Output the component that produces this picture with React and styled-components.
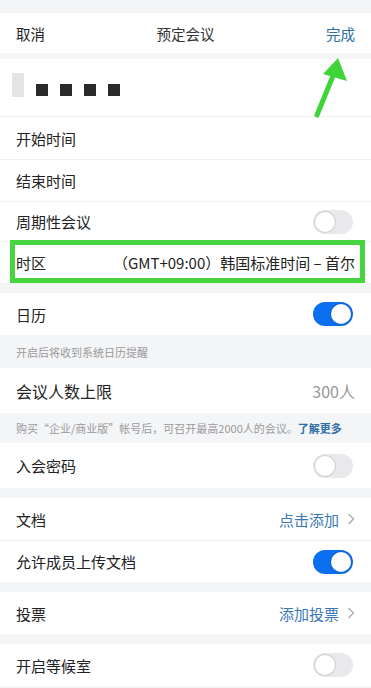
import styled, { createGlobalStyle } from "styled-components";

const GlobalStyle = createGlobalStyle`
  html, body {
    margin: 0;
    padding: 0;
    background: #f4f5f7;
  }
  body {
    font-family: "Noto Sans CJK SC", "Noto Sans", sans-serif;
    color: #222;
  }
`;

const Page = styled.div`
  position: relative;
  width: 371px;
  height: 688px;
  overflow: hidden;
  background: #f4f5f7;
  padding-top: 13px;
  box-sizing: border-box;
`;

const Header = styled.div`
  height: 40px;
  background: #fff;
  display: flex;
  align-items: center;
  justify-content: space-between;
  padding: 0 16px;
  font-size: 14.5px;
  margin-bottom: 6px;
  position: relative;
`;

const Title = styled.div`
  position: absolute;
  left: 0;
  right: 0;
  text-align: center;
  pointer-events: none;
  color: #333;
`;

const Done = styled.span`
  color: #2e6ea6;
`;

const Group = styled.div`
  background: #fff;
  margin-bottom: ${(p) => p.$gap || 0}px;
`;

const NameRow = styled.div`
  height: 57px;
  display: flex;
  align-items: center;
  gap: 12px;
  padding-left: 12px;
  border-bottom: 1px solid #f0f0f0;
`;

const Cursor = styled.div`
  width: 12px;
  height: 24px;
  background: #e4e4e6;
  margin-top: -5px;
`;

const Dots = styled.div`
  display: flex;
  gap: 12px;
  margin-top: 5px;
`;

const Dot = styled.span`
  width: 12px;
  height: 12px;
  background: #2a2a2a;
`;

const Row = styled.div`
  position: relative;
  height: ${(p) => p.$h || 42}px;
  display: flex;
  align-items: center;
  justify-content: space-between;
  padding: 0 16px;
  box-sizing: border-box;
  font-size: ${(p) => p.$fs || 15}px;
  color: #222;
  & + & {
    border-top: 1px solid #f0f0f0;
  }
  ${(p) =>
    p.$highlight &&
    `
    &::after {
      content: "";
      position: absolute;
      left: 10px;
      right: 6px;
      top: -2px;
      bottom: 0;
      border: 5px solid #46d43f;
    }
  `}
`;

const Value = styled.span`
  color: ${(p) => (p.$muted ? "#999" : "#222")};
  font-size: ${(p) => p.$fs || 15}px;
`;

const Link = styled.span`
  display: flex;
  align-items: center;
  gap: 8px;
  color: #3a78b4;
  font-size: 15px;
`;

const Chevron = styled.svg`
  width: 8px;
  height: 12px;
`;

const Toggle = styled.div`
  width: 40px;
  height: 24px;
  border-radius: 12px;
  box-sizing: border-box;
  background: ${(p) => (p.$on ? "#0b6ff0" : "#e9e9eb")};
  position: relative;
  margin-right: 2px;
  &::after {
    content: "";
    position: absolute;
    top: 2px;
    left: ${(p) => (p.$on ? "18px" : "2px")};
    width: 20px;
    height: 20px;
    border-radius: 50%;
    background: #fff;
    box-shadow: 0 0 0 1px rgba(0, 0, 0, 0.1);
  }
`;

const Hint = styled.div`
  height: ${(p) => p.$h || 32}px;
  display: flex;
  align-items: center;
  padding: 0 16px;
  font-size: 11px;
  color: #9a9a9a;
`;

const HintLink = styled.span`
  color: #2e6ea6;
  font-weight: 600;
`;

const Arrow = styled.svg`
  position: absolute;
  left: 305px;
  top: 52px;
  width: 50px;
  height: 70px;
`;

const ChevronIcon = () => (
  <Chevron viewBox="0 0 8 12">
    <path d="M1.5 1 L6.5 6 L1.5 11" fill="none" stroke="#aaa" strokeWidth="1.3" />
  </Chevron>
);

export default function App() {
  return (
    <>
      <GlobalStyle />
      <Page>
        <Header>
          <span>取消</span>
          <Title>预定会议</Title>
          <Done>完成</Done>
        </Header>

        <Group $gap={10}>
          <NameRow>
            <Cursor />
            <Dots>
              <Dot />
              <Dot />
              <Dot />
              <Dot />
            </Dots>
          </NameRow>
          <Row>开始时间</Row>
          <Row>结束时间</Row>
          <Row $h={40}>
            周期性会议
            <Toggle />
          </Row>
          <Row $highlight>
            时区
            <Value>（GMT+09:00）韩国标准时间 – 首尔</Value>
          </Row>
        </Group>

        <Group>
          <Row>
            日历
            <Toggle $on />
          </Row>
        </Group>
        <Hint $h={33}>开启后将收到系统日历提醒</Hint>
        <Group>
          <Row $h={45} $fs={16}>
            会议人数上限
            <Value $muted $fs={16}>300人</Value>
          </Row>
        </Group>
        <Hint $h={30}>
          购买“企业/商业版”帐号后，可召开最高2000人的会议。
          <HintLink>了解更多</HintLink>
        </Hint>
        <Group $gap={10}>
          <Row $h={45}>
            入会密码
            <Toggle />
          </Row>
        </Group>

        <Group $gap={10}>
          <Row>
            文档
            <Link>
              点击添加
              <ChevronIcon />
            </Link>
          </Row>
          <Row>
            允许成员上传文档
            <Toggle $on />
          </Row>
        </Group>

        <Group $gap={10}>
          <Row>
            投票
            <Link>
              添加投票
              <ChevronIcon />
            </Link>
          </Row>
        </Group>

        <Group>
          <Row>
            开启等候室
            <Toggle />
          </Row>
        </Group>

        <Arrow viewBox="0 0 50 70">
          <path d="M12 63 L30 19" stroke="#3fd43a" strokeWidth="5" strokeLinecap="round" />
          <path d="M33 6 L42 29 L18 22 Z" fill="#3fd43a" />
        </Arrow>
      </Page>
    </>
  );
}
